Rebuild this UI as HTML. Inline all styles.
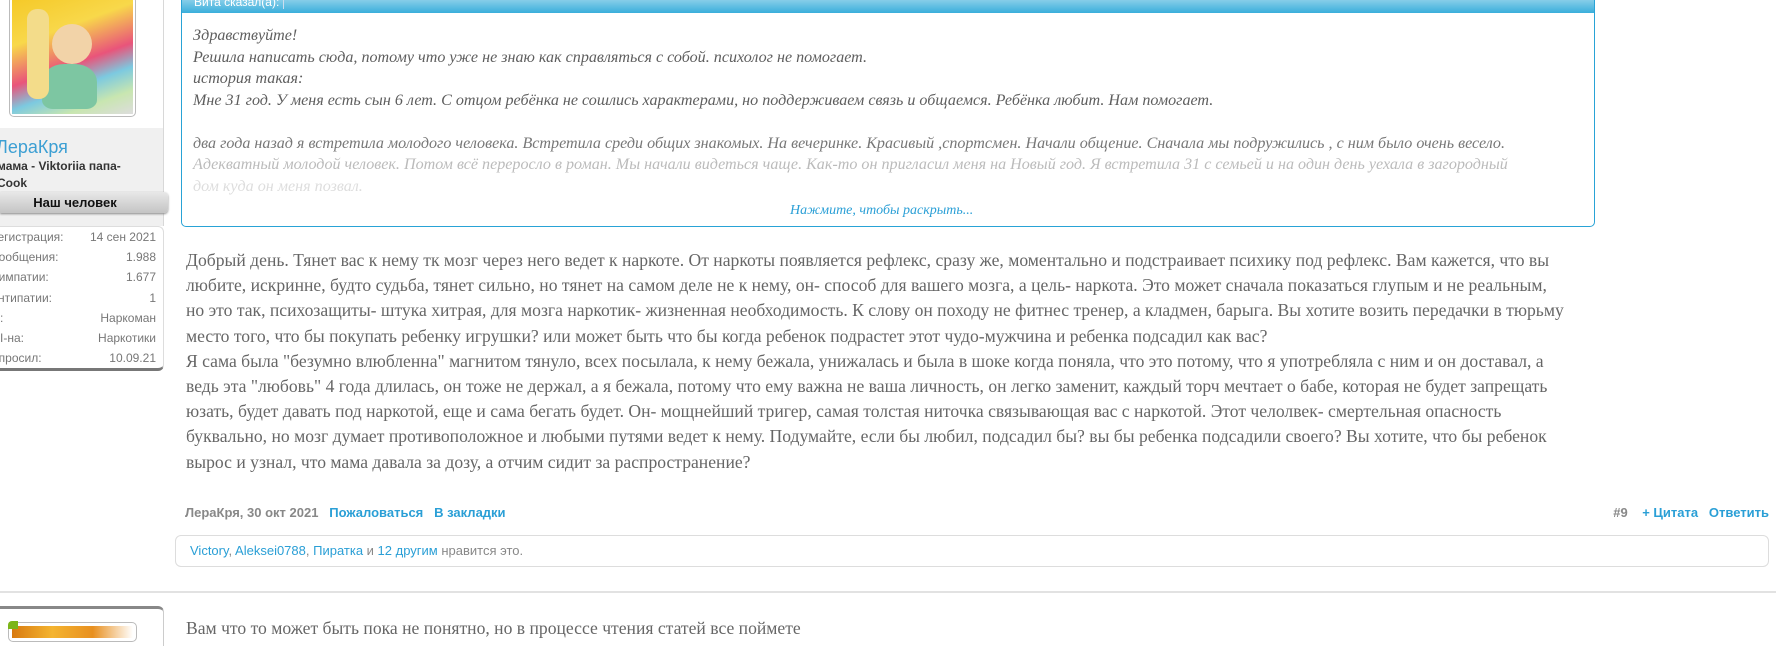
<!DOCTYPE html>
<html><head><meta charset="utf-8"><style>
*{margin:0;padding:0;box-sizing:border-box}
body{width:1776px;height:633px;overflow:hidden;background:#fff;position:relative;font-family:"Liberation Sans",sans-serif}
.abs{position:absolute;white-space:nowrap}
.q{font-family:"Liberation Serif",serif;font-style:italic;font-size:16.1px;color:#5e5e5e}
.b{font-family:"Liberation Serif",serif;font-size:17.6px;color:#666;line-height:25.2px}
.st{font-size:12px;color:#777}
.lnk{color:#2a9fd6}
</style></head><body>
<!-- sidebar -->
<div class="abs" style="left:0;top:0;width:164px;height:226px;background:#f0f0f0;border-right:1px solid #d8d8d8"></div>
<div class="abs" style="left:0;top:0;width:164px;height:128px;background:#fff;border-right:1px solid #d8d8d8"></div>
<div class="abs" style="left:9px;top:-4px;width:127px;height:121px;border:1px solid #bbb;border-radius:5px;background:#fff;padding:2px;overflow:hidden">
<div style="width:100%;height:100%;background:linear-gradient(160deg,#f5c928 0%,#f8d84a 30%,#e9547a 55%,#7cc9e0 70%,#c8e6b0 85%,#ddd 100%);position:relative">
<div style="position:absolute;left:40px;top:25px;width:40px;height:40px;border-radius:50%;background:#f2d3a8"></div>
<div style="position:absolute;left:30px;top:65px;width:55px;height:45px;border-radius:40% 40% 20% 20%;background:#7dc6a2"></div>
<div style="position:absolute;left:15px;top:10px;width:22px;height:90px;background:#f3dc8a;border-radius:10px"></div>
</div></div>
<div class="abs" style="left:-4px;top:137px;font-size:18px;color:#3c9fd3">ЛераКря</div>
<div class="abs" style="left:-3px;top:158px;font-size:12px;font-weight:bold;color:#333;line-height:17px">мама - Viktoriia папа-<br>Cook</div>
<div class="abs" style="left:0;top:192px;width:168px;height:21px;background:linear-gradient(#e8e8e8,#c4c4c4);border-radius:0 4px 4px 0;box-shadow:0 1px 2px #888;text-align:center;font-size:13px;font-weight:bold;color:#111;line-height:21px;padding-right:18px">Наш человек</div>
<div class="abs" style="left:0;top:226px;width:164px;height:145px;background:#fff;border:1px solid #ddd;border-left:none;border-bottom:3px solid #777;border-radius:0 6px 6px 0"></div>
<div class="abs st" style="left:-10px;top:227px;width:166px;line-height:20.2px">
<div style="display:flex;justify-content:space-between"><span>Регистрация:</span><span>14 сен 2021</span></div>
<div style="display:flex;justify-content:space-between"><span>Сообщения:</span><span>1.988</span></div>
<div style="display:flex;justify-content:space-between"><span>Симпатии:</span><span>1.677</span></div>
<div style="display:flex;justify-content:space-between"><span>Антипатии:</span><span>1</span></div>
<div style="display:flex;justify-content:space-between"><span>&nbsp;&nbsp;&nbsp;:</span><span>Наркоман</span></div>
<div style="display:flex;justify-content:space-between"><span>&nbsp;&nbsp;&nbsp;I-на:</span><span>Наркотики</span></div>
<div style="display:flex;justify-content:space-between"><span>Спросил:</span><span>10.09.21</span></div>
</div>
<!-- quote -->
<div class="abs" style="left:181px;top:-2px;width:1414px;height:229px;border:1px solid #29a3d6;border-radius:0 0 5px 5px;background:#fff;overflow:hidden">
<div style="height:14px;background:linear-gradient(#8dd0ea,#3aaedb);font-size:12px;color:#fff;padding-left:12px;line-height:6px">Вита сказал(а): <span style="border-left:1px solid #cde;margin-left:4px"></span></div>
</div>
<div class="abs q" style="left:193px;top:25px;line-height:21.5px">
<div>Здравствуйте!</div>
<div>Решила написать сюда, потому что уже не знаю как справляться с собой. психолог не помогает.</div>
<div>история такая:</div>
<div>Мне 31 год. У меня есть сын 6 лет. С отцом ребёнка не сошлись характерами, но поддерживаем связь и общаемся. Ребёнка любит. Нам помогает.</div>
<div>&nbsp;</div>
<div style="color:#777">два года назад я встретила молодого человека. Встретила среди общих знакомых. На вечеринке. Красивый ,спортсмен. Начали общение. Сначала мы подружились , с ним было очень весело.</div>
<div style="color:#bbb">Адекватный молодой человек. Потом всё переросло в роман. Мы начали видеться чаще. Как-то он пригласил меня на Новый год. Я встретила 31 с семьей и на один день уехала в загородный</div>
<div style="color:#ddd">дом куда он меня позвал.</div>
<div style="color:#f6f6f6">Там мы познакомились поближе и с тех пор начали встречаться. Всё было хорошо.</div>
</div>
<div class="abs" style="left:182px;top:196px;width:1412px;height:30px;background:#fff;border-radius:0 0 5px 5px"></div>
<div class="abs q" style="left:790px;top:203px;font-size:14px;color:#2a9fd6">Нажмите, чтобы раскрыть...</div>
<!-- body -->
<div class="abs b" style="left:186px;top:248px">
Добрый день. Тянет вас к нему тк мозг через него ведет к наркоте. От наркоты появляется рефлекс, сразу же, моментально и подстраивает психику под рефлекс. Вам кажется, что вы<br>
любите, искринне, будто судьба, тянет сильно, но тянет на самом деле не к нему, он- способ для вашего мозга, а цель- наркота. Это может сначала показаться глупым и не реальным,<br>
но это так, психозащиты- штука хитрая, для мозга наркотик- жизненная необходимость. К слову он походу не фитнес тренер, а кладмен, барыга. Вы хотите возить передачки в тюрьму<br>
место того, что бы покупать ребенку игрушки? или может быть что бы когда ребенок подрастет этот чудо-мужчина и ребенка подсадил как вас?<br>
Я сама была "безумно влюбленна" магнитом тянуло, всех посылала, к нему бежала, унижалась и была в шоке когда поняла, что это потому, что я употребляла с ним и он доставал, а<br>
ведь эта "любовь" 4 года длилась, он тоже не держал, а я бежала, потому что ему важна не ваша личность, он легко заменит, каждый торч мечтает о бабе, которая не будет запрещать<br>
юзать, будет давать под наркотой, еще и сама бегать будет. Он- мощнейший тригер, самая толстая ниточка связывающая вас с наркотой. Этот челолвек- смертельная опасность<br>
буквально, но мозг думает противоположное и любыми путями ведет к нему. Подумайте, если бы любил, подсадил бы? вы бы ребенка подсадили своего? Вы хотите, что бы ребенок<br>
вырос и узнал, что мама давала за дозу, а отчим сидит за распространение?
</div>
<!-- footer -->
<div class="abs" style="left:185px;top:505px;font-size:13px;font-weight:bold;color:#888">ЛераКря, 30 окт 2021 &nbsp;&nbsp;<span class="lnk">Пожаловаться</span> &nbsp;&nbsp;<span class="lnk">В закладки</span></div>
<div class="abs" style="right:7px;top:505px;font-size:13px;font-weight:bold;color:#888">#9 &nbsp;&nbsp;&nbsp;<span class="lnk">+ Цитата</span> &nbsp;&nbsp;<span class="lnk">Ответить</span></div>
<div class="abs" style="left:175px;top:535px;width:1594px;height:32px;border:1px solid #ddd;border-radius:6px;font-size:13px;color:#888;line-height:30px;padding-left:14px"><span class="lnk">Victory</span>, <span class="lnk">Aleksei0788</span>, <span class="lnk">Пиратка</span> и <span class="lnk">12 другим</span> нравится это.</div>
<div class="abs" style="left:0;top:591px;width:1776px;height:2px;background:#e2e2e2"></div>
<!-- next post -->
<div class="abs" style="left:0;top:606px;width:164px;height:40px;border-top:3px solid #888;border-right:1px solid #ccc;border-radius:0 6px 0 0"></div>
<div class="abs" style="left:8px;top:622px;width:129px;height:20px;border:1px solid #bbb;border-radius:5px;padding:3px"><div style="height:100%;background:linear-gradient(90deg,#d87a10,#f4b430,#e89020,#fff)"></div></div>
<div class="abs" style="left:8px;top:621px;width:10px;height:8px;background:#7cb518;border-radius:4px 0 0 0"></div>
<div class="abs b" style="left:186px;top:616px">Вам что то может быть пока не понятно, но в процессе чтения статей все поймете</div>
</body></html>
